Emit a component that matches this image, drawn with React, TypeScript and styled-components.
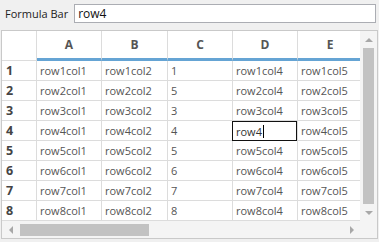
import styled, { createGlobalStyle } from 'styled-components';

const GlobalStyle = createGlobalStyle`
  html, body {
    margin: 0;
    padding: 0;
    background: #f0f0f0;
  }
  body {
    font-family: "Open Sans", "Noto Sans", sans-serif;
  }
`;

const Window = styled.div`
  width: 379px;
  height: 242px;
  background: #f0f0f0;
  display: flex;
  flex-direction: column;
  overflow: hidden;
`;

const Toolbar = styled.div`
  height: 30px;
  display: flex;
  align-items: center;
  padding: 0 3px 3px 5px;
  box-sizing: border-box;
  gap: 6px;
`;

const Label = styled.span`
  font-size: 11px;
  color: #222;
  white-space: nowrap;
`;

const FormulaInput = styled.div`
  flex: 1;
  height: 19px;
  box-sizing: border-box;
  border: 1px solid #abadb3;
  background: #fff;
  font-size: 12px;
  color: #111;
  padding-left: 3px;
  line-height: 17px;
`;

const Frame = styled.div`
  margin: 0 1px 0 1px;
  width: 377px;
  height: 209px;
  box-sizing: border-box;
  border: 1px solid #c9c9c9;
  background: #fff;
  display: flex;
  flex-direction: column;
`;

const Body = styled.div`
  display: flex;
  height: 190px;
`;

const Viewport = styled.div`
  width: 358px;
  overflow: hidden;
`;

const Grid = styled.div`
  display: grid;
  grid-template-columns: 35px 65px 66px 65px 65px 65px;
  grid-auto-rows: 20px;
  grid-template-rows: 30px;
  width: max-content;
`;

const Corner = styled.div`
  border-right: 1px solid #dcdcdc;
  border-bottom: 1px solid #dcdcdc;
`;

const ColHead = styled.div`
  border-right: 1px solid #dcdcdc;
  border-bottom: 3px solid #65a4d4;
  display: flex;
  align-items: center;
  justify-content: center;
  font-weight: bold;
  font-size: 12px;
  color: #555;
`;

const RowHead = styled.div`
  border-right: 1px solid #dcdcdc;
  border-bottom: 1px solid #dcdcdc;
  display: flex;
  align-items: center;
  padding-left: 4px;
  font-weight: bold;
  font-size: 12.5px;
  color: #444;
`;

const Cell = styled.div<{ $editing?: boolean }>`
  position: relative;
  border-right: 1px solid #dcdcdc;
  border-bottom: 1px solid #dcdcdc;
  display: flex;
  align-items: center;
  padding-left: 3px;
  font-size: 11px;
  color: #555;
  white-space: nowrap;
  overflow: ${(p) => (p.$editing ? 'visible' : 'hidden')};
`;

const Editor = styled.div`
  position: absolute;
  top: 0;
  left: -1px;
  width: 65px;
  height: 20px;
  box-sizing: border-box;
  border: 1px solid #111;
  background: #fff;
  display: flex;
  align-items: center;
  padding-left: 3px;
  font-size: 11px;
  color: #333;
`;

const Caret = styled.span`
  display: inline-block;
  width: 1px;
  height: 13px;
  background: #000;
  margin-left: 1px;
`;

const VScroll = styled.div`
  width: 17px;
  background: #f4f4f4;
  display: flex;
  flex-direction: column;
  align-items: center;
`;

const HScroll = styled.div`
  display: flex;
  height: 17px;
`;

const HTrack = styled.div`
  width: 358px;
  background: #f4f4f4;
  display: flex;
  align-items: center;
`;

const ScrollCorner = styled.div`
  flex: 1;
  background: #f4f4f4;
`;

const Arrow = styled.div`
  width: 17px;
  height: 17px;
  display: flex;
  align-items: center;
  justify-content: center;
  flex-shrink: 0;
`;

const VThumb = styled.div`
  width: 11px;
  height: 157px;
  background: #c2c2c2;
`;

const HThumb = styled.div`
  width: 129px;
  height: 12px;
  background: #c2c2c2;
  margin-left: 1px;
`;

const Tri = ({ dir }: { dir: 'up' | 'down' | 'left' | 'right' }) => {
  const pts = {
    up: '0,4 4,0 8,4',
    down: '0,0 4,4 8,0',
    left: '4,0 0,4 4,8',
    right: '0,0 4,4 0,8',
  }[dir];
  const vertical = dir === 'up' || dir === 'down';
  return (
    <svg width={vertical ? 8 : 4} height={vertical ? 4 : 8}>
      <polygon points={pts} fill="#a8a8a8" />
    </svg>
  );
};

const cols = ['A', 'B', 'C', 'D', 'E'];
const colC = ['1', '5', '3', '4', '5', '6', '7', '8'];

export default function App() {
  return (
    <Window>
      <GlobalStyle />
      <Toolbar>
        <Label>Formula Bar</Label>
        <FormulaInput>row4</FormulaInput>
      </Toolbar>
      <Frame>
        <Body>
          <Viewport>
            <Grid>
              <Corner />
              {cols.map((c) => (
                <ColHead key={c}>{c}</ColHead>
              ))}
              {colC.map((c, i) => {
                const r = i + 1;
                return [
                  <RowHead key={`h${r}`}>{r}</RowHead>,
                  <Cell key={`a${r}`}>row{r}col1</Cell>,
                  <Cell key={`b${r}`}>row{r}col2</Cell>,
                  <Cell key={`c${r}`}>{c}</Cell>,
                  r === 4 ? (
                    <Cell key={`d${r}`} $editing>
                      <Editor>
                        row4
                        <Caret />
                      </Editor>
                    </Cell>
                  ) : (
                    <Cell key={`d${r}`}>row{r}col4</Cell>
                  ),
                  <Cell key={`e${r}`}>row{r}col5</Cell>,
                ];
              })}
            </Grid>
          </Viewport>
          <VScroll>
            <Arrow>
              <Tri dir="up" />
            </Arrow>
            <VThumb />
            <Arrow>
              <Tri dir="down" />
            </Arrow>
          </VScroll>
        </Body>
        <HScroll>
          <HTrack>
            <Arrow>
              <Tri dir="left" />
            </Arrow>
            <HThumb />
            <div style={{ flex: 1 }} />
            <Arrow>
              <Tri dir="right" />
            </Arrow>
          </HTrack>
          <ScrollCorner />
        </HScroll>
      </Frame>
    </Window>
  );
}
